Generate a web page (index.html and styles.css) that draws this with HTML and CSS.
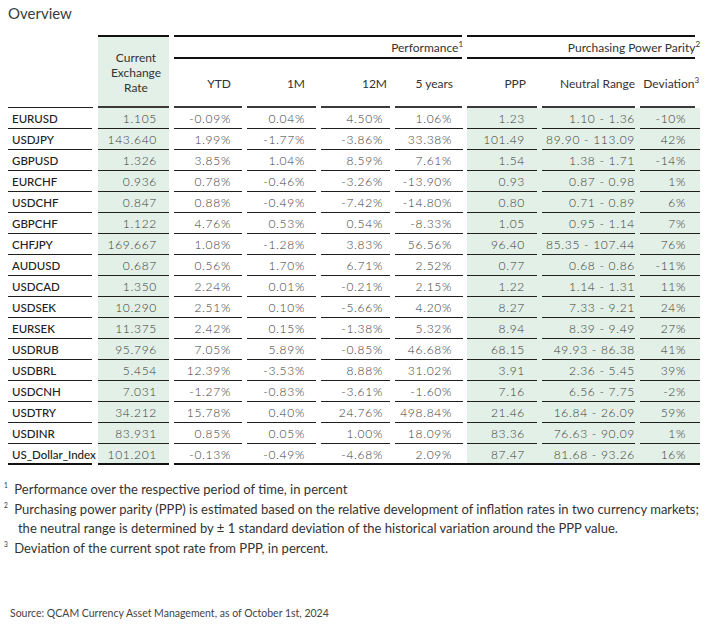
FILE: index.html
```html
<!DOCTYPE html>
<html lang="en">
<head>
  <meta charset="UTF-8">
  <meta name="viewport" content="width=device-width, initial-scale=1">
  <title>Overview</title>
  <link rel="stylesheet" href="styles.css">
</head>
<body>
  <h1 class="title">Overview</h1>

  <table class="fx">
    <colgroup>
      <col class="w-pair"><col class="w-rate"><col class="w-ytd"><col class="w-1m">
      <col class="w-12m"><col class="w-5y"><col class="w-ppp"><col class="w-range"><col class="w-dev">
    </colgroup>
    <thead>
      <tr class="grp">
        <th class="h-pair" rowspan="2"></th>
        <th class="h-rate" rowspan="2">Current<br>Exchange<br>Rate</th>
        <th class="h-perf" colspan="4">Performance<sup>1</sup></th>
        <th class="h-pppgrp" colspan="3">Purchasing Power Parity<sup>2</sup></th>
      </tr>
      <tr class="sub">
        <th class="h-ytd">YTD</th>
        <th class="h-1m">1M</th>
        <th class="h-12m">12M</th>
        <th class="h-5y">5 years</th>
        <th class="h-ppp">PPP</th>
        <th class="h-range">Neutral Range</th>
        <th class="h-dev">Deviation<sup>3</sup></th>
      </tr>
    </thead>
    <tbody id="rows"></tbody>
  </table>

  <div class="notes">
    <p><sup>1</sup>Performance over the respective period of time, in percent</p>
    <p><sup>2</sup>Purchasing power parity (PPP) is estimated based on the relative development of inflation rates in two currency markets;</p>
    <p class="indent">the neutral range is determined by ± 1 standard deviation of the historical variation around the PPP value.</p>
    <p><sup>3</sup>Deviation of the current spot rate from PPP, in percent.</p>
  </div>

  <p class="source">Source: QCAM Currency Asset Management, as of October 1st, 2024</p>

<script>
  // pair, rate, YTD, 1M, 12M, 5 years, PPP, neutral range, deviation
  const data = [
    ['EURUSD', '1.105', '-0.09%', '0.04%', '4.50%', '1.06%', '1.23', '1.10 - 1.36', '-10%'],
    ['USDJPY', '143.640', '1.99%', '-1.77%', '-3.86%', '33.38%', '101.49', '89.90 - 113.09', '42%'],
    ['GBPUSD', '1.326', '3.85%', '1.04%', '8.59%', '7.61%', '1.54', '1.38 - 1.71', '-14%'],
    ['EURCHF', '0.936', '0.78%', '-0.46%', '-3.26%', '-13.90%', '0.93', '0.87 - 0.98', '1%'],
    ['USDCHF', '0.847', '0.88%', '-0.49%', '-7.42%', '-14.80%', '0.80', '0.71 - 0.89', '6%'],
    ['GBPCHF', '1.122', '4.76%', '0.53%', '0.54%', '-8.33%', '1.05', '0.95 - 1.14', '7%'],
    ['CHFJPY', '169.667', '1.08%', '-1.28%', '3.83%', '56.56%', '96.40', '85.35 - 107.44', '76%'],
    ['AUDUSD', '0.687', '0.56%', '1.70%', '6.71%', '2.52%', '0.77', '0.68 - 0.86', '-11%'],
    ['USDCAD', '1.350', '2.24%', '0.01%', '-0.21%', '2.15%', '1.22', '1.14 - 1.31', '11%'],
    ['USDSEK', '10.290', '2.51%', '0.10%', '-5.66%', '4.20%', '8.27', '7.33 - 9.21', '24%'],
    ['EURSEK', '11.375', '2.42%', '0.15%', '-1.38%', '5.32%', '8.94', '8.39 - 9.49', '27%'],
    ['USDRUB', '95.796', '7.05%', '5.89%', '-0.85%', '46.68%', '68.15', '49.93 - 86.38', '41%'],
    ['USDBRL', '5.454', '12.39%', '-3.53%', '8.88%', '31.02%', '3.91', '2.36 - 5.45', '39%'],
    ['USDCNH', '7.031', '-1.27%', '-0.83%', '-3.61%', '-1.60%', '7.16', '6.56 - 7.75', '-2%'],
    ['USDTRY', '34.212', '15.78%', '0.40%', '24.76%', '498.84%', '21.46', '16.84 - 26.09', '59%'],
    ['USDINR', '83.931', '0.85%', '0.05%', '1.00%', '18.09%', '83.36', '76.63 - 90.09', '1%'],
    ['US_Dollar_Index', '101.201', '-0.13%', '-0.49%', '-4.68%', '2.09%', '87.47', '81.68 - 93.26', '16%']
  ];

  const tbody = document.getElementById('rows');
  data.forEach(row => {
    const tr = document.createElement('tr');
    tr.innerHTML = row.map(v => `<td>${v}</td>`).join('');
    tbody.appendChild(tr);
  });
</script>
</body>
</html>
```

FILE: styles.css
```css
/* Overview table */
:root {
  --green: #e2f0e7;
  --rule: #1f1f1f;
  --head-rule: #3a3a3a;
}

body {
  margin: 0;
  padding: 0 8px;
  background: #fff;
  color: #333;
  font-family: Lato, "Open Sans", sans-serif;
}

.title {
  margin: 0;
  padding-top: 3px;
  height: 32px;
  font-size: 15px;
  line-height: 20px;
  font-weight: 400;
  color: #3c3c3c;
}

.fx {
  width: 692px;
  table-layout: fixed;
  border-collapse: separate;
  border-spacing: 0;
  font-size: 12px;
}

.w-pair { width: 90px; }
.w-rate { width: 76px; }
.w-ytd { width: 73px; }
.w-1m { width: 74px; }
.w-12m { width: 74px; }
.w-5y { width: 72px; }
.w-ppp { width: 75px; }
.w-range { width: 98px; }
.w-dev { width: 60px; }

/* each cell draws its own rule, leaving a small gap on the right */
.fx th,
.fx td {
  --lw: calc(100% - 5px);
  --lc: var(--rule);
  --lt: 1px;
  --fill: transparent;
  padding: 0;
  text-align: right;
  white-space: nowrap;
  background:
    linear-gradient(var(--lc), var(--lc)) left bottom / var(--lw) var(--lt) no-repeat,
    var(--fill);
}

.fx sup {
  font-size: 8px;
  line-height: 0;
  vertical-align: 5px;
}

/* header */
.fx th {
  font-weight: 400;
  color: #333;
}

.grp th { height: 24px; }
.sub th {
  height: 49px;
  --lt: 2px;
  --lc: var(--head-rule);
}

.h-pair {
  --lw: calc(100% - 6px);
  --lt: 2px;
  --lc: var(--head-rule);
}

.fx .h-rate {
  text-align: center;
  line-height: 15px;
  padding-top: 1px;
  background:
    linear-gradient(#111, #111) left top / calc(100% - 5px) 2px no-repeat,
    linear-gradient(var(--head-rule), var(--head-rule)) left bottom / calc(100% - 5px) 2px no-repeat,
    linear-gradient(var(--green), var(--green)) left top / calc(100% - 5px) 100% no-repeat;
}

.fx .h-perf,
.fx .h-pppgrp {
  background:
    linear-gradient(#111, #111) left top / var(--lw) 2px no-repeat,
    linear-gradient(#111, #111) left bottom / var(--lw) 2px no-repeat,
    var(--fill);
}

.h-perf { --lw: calc(100% - 4px); padding-right: 4px !important; }
.h-pppgrp { --lw: 100%; --fill: var(--green); }

.h-ytd { padding-right: 16px !important; }
.h-1m { padding-right: 16px !important; }
.h-12m { padding-right: 8px !important; }
.h-5y { --lw: calc(100% - 4px); padding-right: 14px !important; }
.h-ppp { --fill: var(--green); padding-right: 16px !important; }
.h-range { --fill: var(--green); padding-right: 5px !important; }
.h-dev { --fill: var(--green); --lw: 100%; padding-right: 1px !important; }

/* body rows */
.fx td {
  height: 20px;
  padding-bottom: 1px;
  font-weight: 300;
  color: #3a3a3a;
  letter-spacing: 0.7px;
}

.fx td:nth-child(1) {
  --lw: calc(100% - 6px);
  text-align: left;
  padding-left: 4px;
  font-size: 11.5px;
  font-weight: 500;
  color: #222;
  letter-spacing: 0;
}
.fx td:nth-child(2) {
  --fill: linear-gradient(var(--green), var(--green)) left top / calc(100% - 5px) 100% no-repeat;
  padding-right: 17px;
}
.fx td:nth-child(3) { padding-right: 16px; }
.fx td:nth-child(4) { padding-right: 16px; }
.fx td:nth-child(5) { padding-right: 12px; }
.fx td:nth-child(6) { --lw: calc(100% - 4px); padding-right: 15px; }
.fx td:nth-child(7) { --fill: var(--green); padding-right: 17px; }
.fx td:nth-child(8) { --fill: var(--green); padding-right: 5px; }
.fx td:nth-child(9) { --fill: var(--green); --lw: 100%; padding-right: 14px; }

/* heavy closing rule */
.fx tbody tr:last-child td {
  --lt: 2px;
  --lc: #111;
}
.fx tbody tr:last-child td:nth-child(n+3) { --lw: 100%; }

/* footnotes */
.notes {
  margin: 14px 0 0 -4px;
  font-size: 14px;
  line-height: 19.6px;
  color: #333;
  white-space: nowrap;
  transform: scaleX(0.93);
  transform-origin: left top;
}

.notes p { margin: 0; }

.notes sup {
  font-size: 7px;
  line-height: 0;
  vertical-align: 6px;
  margin-right: 7px;
}

.notes .indent { padding-left: 15px; }

.source {
  margin: 49px 0 0 2px;
  font-size: 10.5px;
  line-height: 14px;
  color: #444;
}
```
